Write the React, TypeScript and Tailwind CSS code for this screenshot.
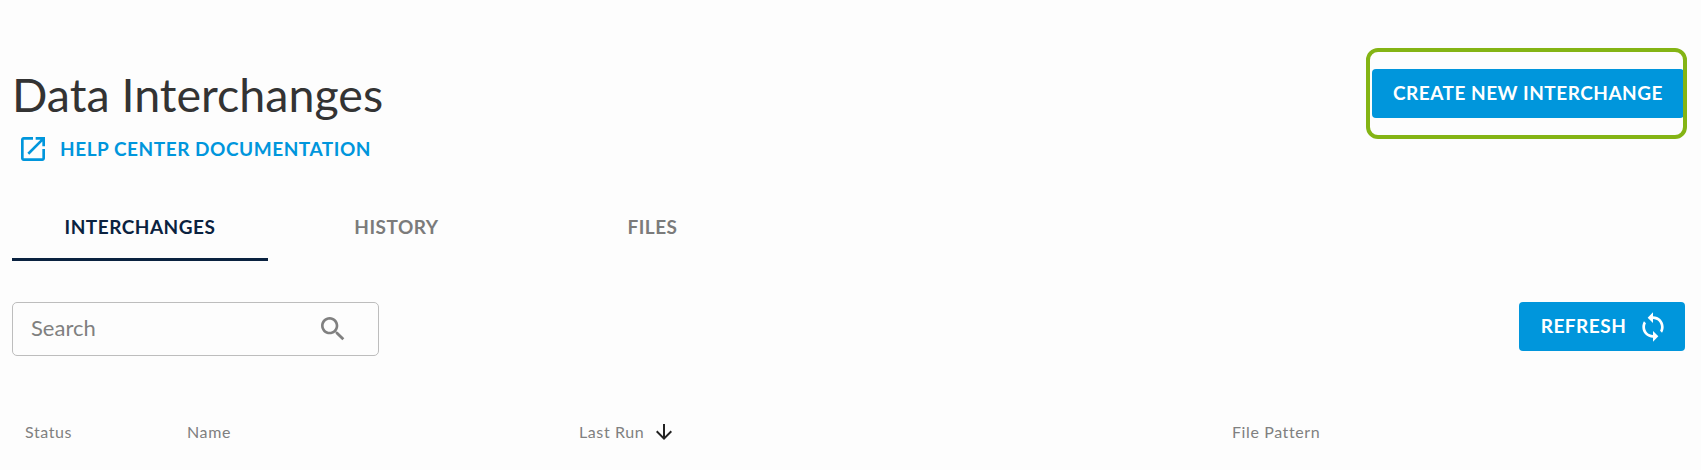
const tabs = ['INTERCHANGES', 'HISTORY', 'FILES'];

export default function App() {
  return (
    <div className="h-[470px] overflow-hidden bg-[#fdfdfd] font-['Lato',sans-serif]">
      {/* Page header */}
      <div className="flex justify-between pl-3 pr-[17px] pt-[69px]">
        <div>
          <h1 className="text-[46.6px] leading-[50px] text-[#333333]">Data Interchanges</h1>
          <a className="ml-[5px] mt-[14px] flex items-center gap-[11px] text-[19px] leading-[32px] font-bold tracking-[0.54px] text-[#0096dc]">
            <svg className="h-8 w-8" viewBox="0 0 24 24" fill="currentColor">
              <path d="M19 19H5V5h7V3H5c-1.11 0-2 .9-2 2v14c0 1.1.89 2 2 2h14c1.1 0 2-.9 2-2v-7h-2v7zM14 3v2h3.59l-9.83 9.83 1.41 1.41L19 6.41V10h2V3h-7z" />
            </svg>
            HELP CENTER DOCUMENTATION
          </a>
        </div>
        <div className="relative h-[49px]">
          <button className="h-[49px] w-[312px] rounded-[4px] bg-[#0096dc] text-[19px] font-bold tracking-[0.5px] text-white">
            CREATE NEW INTERCHANGE
          </button>
          {/* Green highlight round the button */}
          <div className="absolute -left-[6px] -right-[3px] -top-[21px] -bottom-[21px] rounded-[12px] border-[4px] border-[#84b414]" />
        </div>
      </div>

      {/* Tabs */}
      <div className="mt-[36px] flex pl-3">
        {tabs.map((tab, i) => (
          <div
            key={tab}
            className={
              i === 0
                ? 'h-[60px] w-[256px] border-b-[3px] border-[#0a2240] pt-[14px] text-center text-[19px] leading-[24px] font-bold tracking-[0.5px] text-[#0a2240]'
                : 'h-[60px] w-[256px] pt-[14px] pl-px text-center text-[19px] leading-[24px] font-bold tracking-[0.5px] text-[#7b7b7b]'
            }
          >
            {tab}
          </div>
        ))}
      </div>

      {/* Search and refresh */}
      <div className="mt-[41px] flex items-start justify-between pl-3 pr-4">
        <div className="flex h-[54px] w-[367px] items-center justify-between rounded-[5px] border border-[#bdbdbd] pl-[18px] pr-[29px]">
          <span className="pb-[3px] text-[22px] text-[#808080]">Search</span>
          <svg className="h-8 w-8 text-[#808080]" viewBox="0 0 24 24" fill="currentColor">
            <path d="M15.5 14h-.79l-.28-.27C15.41 12.59 16 11.11 16 9.5 16 5.91 13.09 3 9.5 3S3 5.91 3 9.5 5.91 16 9.5 16c1.61 0 3.09-.59 4.23-1.57l.27.28v.79l5 4.99L20.49 19l-4.99-5zm-6 0C7.01 14 5 11.99 5 9.5S7.01 5 9.5 5 14 7.01 14 9.5 11.99 14 9.5 14z" />
          </svg>
        </div>
        <button className="flex h-[49px] w-[166px] items-center justify-center gap-[11px] rounded-[4px] bg-[#0096dc] pl-[6px] text-[19px] font-bold tracking-[0.5px] text-white">
          REFRESH
          <svg className="h-8 w-8" viewBox="0 0 24 24" fill="currentColor">
            <path d="M12 4V1L8 5l4 4V6c3.31 0 6 2.69 6 6 0 1.01-.25 1.97-.7 2.8l1.46 1.46C19.54 15.03 20 13.57 20 12c0-4.42-3.58-8-8-8zm0 14c-3.31 0-6-2.69-6-6 0-1.01.25-1.97.7-2.8L5.24 7.74C4.46 8.97 4 10.43 4 12c0 4.42 3.58 8 8 8v3l4-4-4-4v3z" />
          </svg>
        </button>
      </div>

      {/* Table header */}
      <div className="mt-[64px] flex items-center text-[16px] leading-[24px] tracking-[0.6px] text-[#808080]">
        <div className="w-[187px] pl-[25px]">Status</div>
        <div className="w-[392px]">Name</div>
        <div className="flex w-[653px] items-center gap-2">
          Last Run
          <svg className="h-6 w-6 text-[#222222]" viewBox="0 0 24 24" fill="currentColor">
            <path d="M20 12l-1.41-1.41L13 16.17V4h-2v12.17l-5.58-5.59L4 12l8 8 8-8z" />
          </svg>
        </div>
        <div>File Pattern</div>
      </div>
    </div>
  );
}
